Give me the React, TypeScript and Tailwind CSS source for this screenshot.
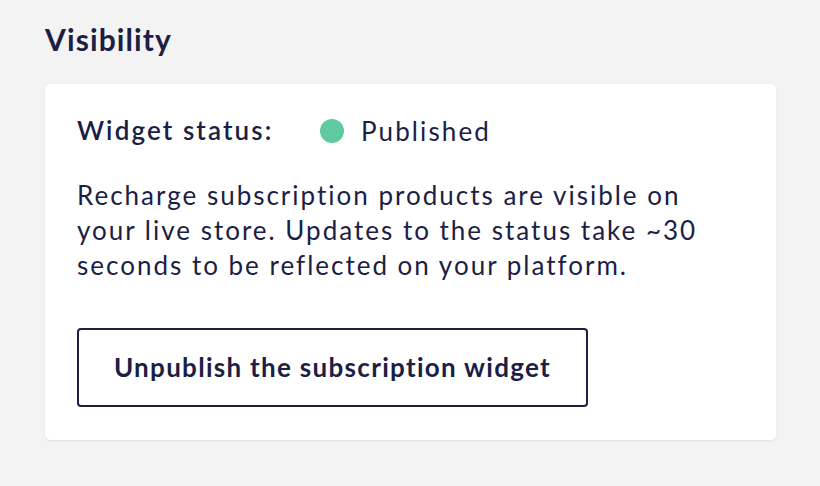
import React from 'react';

const App: React.FC = () => {
    return (
        <div className="w-[820px] h-[486px] bg-[#f3f3f3] text-[#1c1e45] px-[45px] pt-[21px] font-['Lato',sans-serif]">
            <h2 className="text-[30px] font-bold leading-[36px] tracking-[1.1px]">Visibility</h2>
            <div className="mt-[27px] w-[731px] bg-white rounded-[5px] shadow-[0_1px_2px_rgba(0,0,0,0.08)] px-[32px] pt-[28px] pb-[33px]">
                <div className="flex items-center h-[36px] text-[26px] leading-[36px]">
                    <span className="w-[243px] font-semibold tracking-[2.1px]">Widget status:</span>
                    <span className="w-[24px] h-[24px] rounded-full bg-[#5fc9a0] translate-y-[1px]" />
                    <span className="ml-[17px] tracking-[2.1px] translate-y-[1px]">Published</span>
                </div>
                <p className="mt-[30px] text-[26px] leading-[35px] tracking-[2px] w-[650px]">
                    Recharge subscription products are visible on your live store. Updates to the status take ~30 seconds to be reflected on your platform.
                </p>
                <button className="mt-[45px] w-[511px] h-[79px] border-2 border-[#1c1e45] rounded-[4px] text-[26px] font-bold tracking-[1.3px]">
                    Unpublish the subscription widget
                </button>
            </div>
        </div>
    );
};

export default App;
